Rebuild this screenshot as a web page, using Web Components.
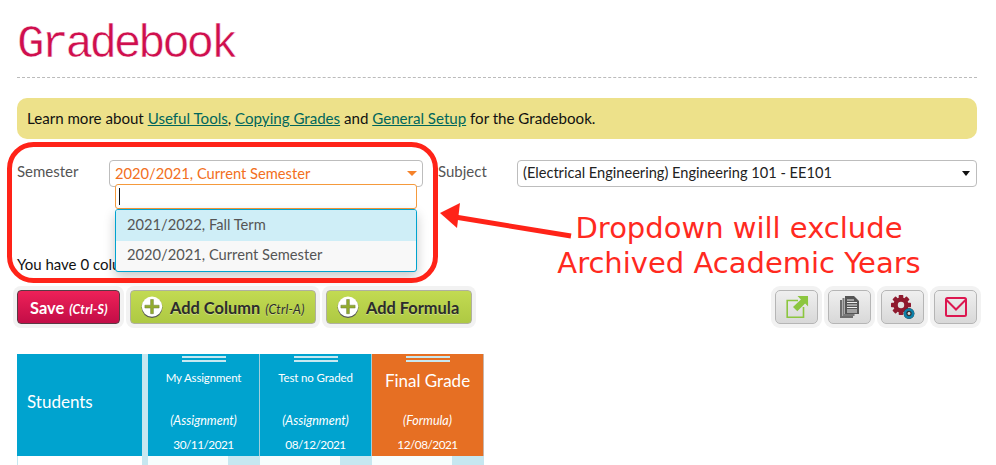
<!DOCTYPE html>
<html lang="en"><head><meta charset="utf-8"><title>Gradebook</title>
<style>
html,body{margin:0;padding:0;background:#fff}
body{font-family:Lato,"Open Sans",sans-serif;font-size:15px;color:#111;width:996px;height:465px;overflow:hidden;position:relative}
gb-page{width:996px}
gb-notice a{color:#00665c;text-decoration:underline}
</style></head><body>
<gb-page>
  <gb-title>Gradebook</gb-title>
  <gb-notice>Learn more about <a>Useful Tools</a>, <a>Copying Grades</a> and <a>General Setup</a> for the Gradebook.</gb-notice>
  <gb-filters></gb-filters>
  <gb-toolbar></gb-toolbar>
  <gb-grid></gb-grid>
</gb-page>
<gb-callout></gb-callout>
<script>
function def(name,html){
  customElements.define(name,class extends HTMLElement{
    constructor(){super();const r=this.attachShadow({mode:'open'});r.innerHTML=typeof html==='function'?html(this):html;}
  });
}
def('gb-page',`<style>:host{display:flex;flex-direction:column;padding:0 19px 0 17px;box-sizing:border-box}</style><slot></slot>`);
def('gb-title',`<style>:host{display:block;height:78px;box-sizing:border-box;border-bottom:1px dashed #bbb;color:#cf0f4e;font:400 46px/1 "Liberation Mono",monospace;padding-top:22px;letter-spacing:-3.4px;-webkit-text-stroke:.45px #fff;paint-order:fill}</style><slot></slot>`);
def('gb-notice',`<style>:host{display:block;margin-top:20px;height:41px;box-sizing:border-box;background:#ede18a;border-radius:10px;padding:11px 10px;font-size:15.1px;line-height:19px;color:#111}</style><slot></slot>`);
const sel=`display:flex;align-items:center;justify-content:space-between;box-sizing:border-box;height:27px;border:1px solid #bdbdbd;border-radius:4px;background:#fff;padding:0 5px;font-size:14.7px`;
def('gb-filters',`<style>
:host{display:grid;grid-template-columns:92px 314px 15px 79px 460px;margin-top:21px;height:127px;position:relative;grid-template-rows:27px 1fr;color:#555}
.lab{font-size:15px;line-height:22px;color:#555}
.s1{${sel};color:#f26f21}.s2{${sel};color:#222;padding-left:5px;font-size:14.6px}
.s1 span,.s2 span{position:relative;top:-1px}
.s1 i{width:0;height:0;border:5px solid transparent;border-top:5px solid #f5822a;border-bottom:0}
.s2 i{width:0;height:0;border:4.5px solid transparent;border-top:5px solid #111;border-bottom:0;margin-right:1px}
.have{grid-column:1/-1;align-self:end;color:#111;font-size:15px;line-height:20px;margin-bottom:13px}
.drop{position:absolute;left:98px;top:24px;width:302px;font-size:14.7px;color:#555}
.search{box-sizing:border-box;height:25px;border:1px solid #f59a3c;border-radius:3px;background:#fff;display:flex;align-items:center;padding-left:3px}
.search b{width:1px;height:17px;background:#111}
.list{box-sizing:border-box;height:63px;border:1px solid #00a3cf;border-radius:3px;overflow:hidden;box-shadow:0 5px 12px rgba(0,0,0,.22);background:#f8f8f8}
.list div{height:30px;line-height:27px;padding-left:11px}
.list div:first-child{background:#cfeef7;height:31px;line-height:29px}
</style>
<span class="lab">Semester</span>
<div class="s1"><span>2020/2021, Current Semester</span><i></i></div>
<span></span>
<span class="lab">Subject</span>
<div class="s2"><span>(Electrical Engineering) Engineering 101 - EE101</span><i></i></div>
<div class="have">You have 0 columns</div>
<div class="drop"><div class="search"><b></b></div><div class="list"><div>2021/2022, Fall Term</div><div>2020/2021, Current Semester</div></div></div>`);

def('gb-btn',`<style>
:host{display:flex;align-items:center;box-sizing:border-box;height:34px;border-radius:4px;box-shadow:0 0 0 4px #f2f2f2;font-weight:700;font-size:16.4px;white-space:nowrap}
:host([kind=save]){background:linear-gradient(#ee2158,#c30d47);color:#fff;border:1px solid #5a3a44;padding-left:12px}
:host([kind=add]){background:linear-gradient(#c2da52,#aec943);color:#2c2c2c;border:1px solid #b0b0a0;padding-left:10px;gap:7px;text-shadow:0 1px 0 rgba(255,255,255,.35)}
svg{display:block;flex:none}
</style><slot></slot>`);
def('gb-tool',`<style>:host{display:flex;align-items:center;justify-content:center;box-sizing:border-box;width:43px;height:34px;border-radius:5px;border:1px solid #b5b5b5;background:linear-gradient(#efefef,#d8d8d8);box-shadow:0 0 0 4px #f2f2f2}</style><slot></slot>`);
const plus=`<svg width="22" height="22" viewBox="0 0 22 22"><circle cx="11" cy="11.600" r="10.400" fill="#555"/><circle cx="11" cy="10.600" r="10.200" fill="#fff"/><path d="M9.600 3.500h2.800v5.700h5.700v2.800h-5.700v5.700H9.600V12H3.900V9.200h5.700z" fill="#93ad2e" stroke="#6d7a3a" stroke-width=".5"/></svg>`;
def('gb-toolbar',`<style>
:host{display:flex;justify-content:space-between;margin-top:3px;height:34px}
.g{display:flex;gap:10px}.r{display:flex;gap:10px}
em{font-style:italic;font-size:12.500px;margin-left:5px;letter-spacing:.25px}
</style>
<div class="g">
<gb-btn kind="save" style="width:103px"><span>Save<em>(Ctrl-S)</em></span></gb-btn>
<gb-btn kind="add" style="width:186px">${plus}<span>Add Column<em style="font-weight:400">(Ctrl-A)</em></span></gb-btn>
<gb-btn kind="add" style="width:146px">${plus}<span>Add Formula</span></gb-btn>
</div>
<div class="r">
<gb-tool><svg width="24" height="24" viewBox="0 0 24 24"><path d="M13 5.500H2.200V22.200H18.500V12" fill="none" stroke="#8cc63f" stroke-width="1.600"/><path d="M23 1H12.500l3.400 3.400-7.900 7.500 4.300 4.400 7.800-7.700 3 3z" fill="#8cc63f"/></svg></gb-tool>
<gb-tool><svg width="20" height="22" viewBox="0 0 20 22"><path d="M0 4h2V20H13v2H0z" fill="#6c6c6c"/><path d="M2.500 2h2V18h10v2H2.500z" fill="#7a7a7a"/><path d="M5 0h9l5 5v13H5z" fill="#555"/><path d="M7 4h7M7 6.500h10M7 9h10M7 11.500h10M7 14h10M7 16h10" stroke="#eee" stroke-width="1.100"/></svg></gb-tool>
<gb-tool><svg width="24" height="24" viewBox="0 0 24 24"><g transform="translate(10 10)"><g fill="#8f1a2e"><circle r="7.600"/><rect x="-2.300" y="-10" width="4.600" height="20" rx=".8"/><rect x="-2.300" y="-10" width="4.600" height="20" rx=".8" transform="rotate(45)"/><rect x="-2.300" y="-10" width="4.600" height="20" rx=".8" transform="rotate(90)"/><rect x="-2.300" y="-10" width="4.600" height="20" rx=".8" transform="rotate(135)"/></g><circle r="3.200" fill="#e2e2e2"/></g><g transform="translate(18 18.500)"><circle r="5.400" fill="#222" opacity=".9"/><circle r="4" fill="none" stroke="#0e7fa8" stroke-width="2.600"/><circle r="1.400" fill="#ddd"/></g></svg></gb-tool>
<gb-tool><svg width="22" height="20" viewBox="0 0 22 20"><rect x="1" y="1" width="20" height="18" rx="1.500" fill="none" stroke="#dc1750" stroke-width="2"/><path d="M1.500 3L11 12.500 20.500 3" fill="none" stroke="#dc1750" stroke-width="2"/></svg></gb-tool>
</div>`);

def('gb-head',h=>{
 const t=h.getAttribute('title-text'),k=h.getAttribute('kind-text'),d=h.getAttribute('date'),big=h.hasAttribute('big');
 return `<style>
:host{display:flex;flex-direction:column;align-items:center;box-sizing:border-box;height:102px;background:#00a3cf;color:#fff;position:relative;border-right:1px solid #9fcfdc;text-align:center}
:host([orange]){background:#e66f23;border-right-color:#c9b5a8}
.h{margin-top:2px;width:44px;height:2px;border-top:2px solid #c8e8f0;border-bottom:2px solid #c8e8f0;flex:none}
.t{font-size:11.500px;line-height:16px;margin-top:8px;height:41px;letter-spacing:-.15px}
.t.big{font-size:17px;line-height:20px;margin-top:9px;height:40px;letter-spacing:0}
.k{font-style:italic;font-size:12.500px;line-height:16px;margin-top:2px}
.d{font-size:11.800px;line-height:16px;margin-top:8px;letter-spacing:-.5px}
</style><div class="h"></div><div class="t ${big?'big':''}">${t}</div><div class="k">${k}</div><div class="d">${d}</div>`});
def('gb-grid',`<style>
:host{display:grid;grid-template-columns:125px 6px 112px 112px 112px;margin-top:30px;width:467px;background:#c6e7f0}
.st{height:102px;background:#00a3cf;color:#fff;display:flex;align-items:center;padding:0 0 8px 10px;font-size:17px;box-sizing:border-box}
.sp{background:#c6e7f0}
.c{height:20px;background:#c6e7f0;display:grid;grid-template-columns:80px 1fr}
.c i{background:#f7fdfd}
.s0{height:20px;background:#fff;border-left:1px solid #c6e7f0}
</style>
<div class="st">Students</div><div class="sp"></div>
<gb-head title-text="My Assignment" kind-text="(Assignment)" date="30/11/2021"></gb-head>
<gb-head title-text="Test no Graded" kind-text="(Assignment)" date="08/12/2021"></gb-head>
<gb-head orange big title-text="Final Grade" kind-text="(Formula)" date="12/08/2021"></gb-head>
<div class="s0"></div><div class="sp"></div>
<div class="c"><i></i></div><div class="c"><i></i></div><div class="c"><i></i></div>`);
def('gb-callout',`<style>
:host{display:block;position:absolute;left:0;top:0;width:996px;height:465px;pointer-events:none}
svg{position:absolute;left:0;top:0}
.n{position:absolute;left:540px;width:398px;text-align:center;color:#ff2a1f;font:400 29px/34.500px "DejaVu Sans",sans-serif;top:211px;white-space:nowrap}
</style>
<svg width="996" height="465"><rect x="9.500" y="144.500" width="426" height="136" rx="24" fill="none" stroke="#ff2318" stroke-width="5"/>
<path d="M440 213L460 203L457 228Z" fill="#ff2318"/><path d="M455 217L571 236" stroke="#ff2318" stroke-width="5"/></svg>
<div class="n">Dropdown will exclude<br>Archived Academic Years</div>`);
</script>
</body></html>
